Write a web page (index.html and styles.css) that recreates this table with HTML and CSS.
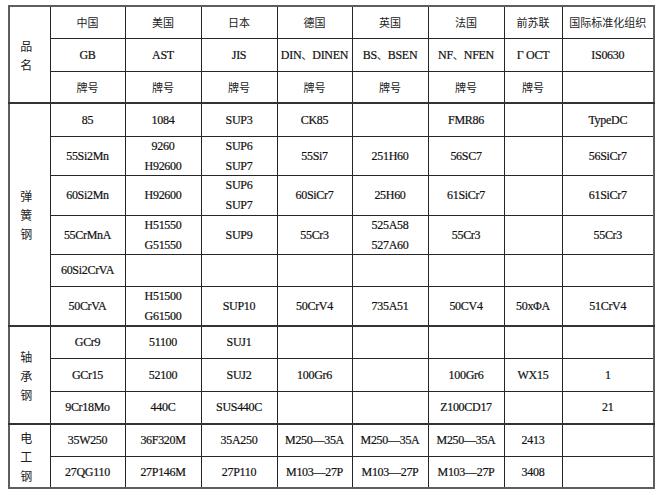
FILE: index.html
```html
<!DOCTYPE html>
<html lang="zh">
<head>
<meta charset="utf-8">
<title>钢号对照表</title>
<link rel="stylesheet" href="styles.css">
</head>
<body>
<table class="grades">
  <colgroup>
    <col class="w41"><col class="w75"><col class="w76"><col class="w76"><col class="w75"><col class="w76"><col class="w76"><col class="w58"><col class="w92">
  </colgroup>
  <tbody class="sec">
    <tr class="h32">
      <th rowspan="3" class="cat"><div class="stack">品<br>名</div></th>
      <th class="zh">中国</th><th class="zh">美国</th><th class="zh">日本</th><th class="zh">德国</th><th class="zh">英国</th><th class="zh">法国</th><th class="zh">前苏联</th><th class="zh">国际标准化组织</th>
    </tr>
    <tr class="h33">
      <td>GB</td><td>AST</td><td>JIS</td><td>DIN<span class="zh">、</span>DINEN</td><td>BS<span class="zh">、</span>BSEN</td><td>NF<span class="zh">、</span>NFEN</td><td>Г OCT</td><td>IS0630</td>
    </tr>
    <tr class="h32">
      <td class="zh">牌号</td><td class="zh">牌号</td><td class="zh">牌号</td><td class="zh">牌号</td><td class="zh">牌号</td><td class="zh">牌号</td><td class="zh">牌号</td><td></td>
    </tr>
  </tbody>
  <tbody class="sec">
    <tr class="h33">
      <th rowspan="6" class="cat"><div class="stack">弹<br>簧<br>钢</div></th>
      <td>85</td><td>1084</td><td>SUP3</td><td>CK85</td><td></td><td>FMR86</td><td></td><td>TypeDC</td>
    </tr>
    <tr class="h39">
      <td>55Si2Mn</td><td><div class="pair"><span>9260</span><span>H92600</span></div></td><td><div class="pair"><span>SUP6</span><span>SUP7</span></div></td><td>55Si7</td><td>251H60</td><td>56SC7</td><td></td><td>56SiCr7</td>
    </tr>
    <tr class="h40">
      <td>60Si2Mn</td><td>H92600</td><td><div class="pair"><span>SUP6</span><span>SUP7</span></div></td><td>60SiCr7</td><td>25H60</td><td>61SiCr7</td><td></td><td>61SiCr7</td>
    </tr>
    <tr class="h39">
      <td>55CrMnA</td><td><div class="pair"><span>H51550</span><span>G51550</span></div></td><td>SUP9</td><td>55Cr3</td><td><div class="pair"><span>525A58</span><span>527A60</span></div></td><td>55Cr3</td><td></td><td>55Cr3</td>
    </tr>
    <tr class="h32">
      <td>60Si2CrVA</td><td></td><td></td><td></td><td></td><td></td><td></td><td></td>
    </tr>
    <tr class="h40">
      <td>50CrVA</td><td><div class="pair"><span>H51500</span><span>G61500</span></div></td><td>SUP10</td><td>50CrV4</td><td>735A51</td><td>50CV4</td><td>50xΦA</td><td>51CrV4</td>
    </tr>
  </tbody>
  <tbody class="sec">
    <tr class="h32">
      <th rowspan="3" class="cat"><div class="stack">轴<br>承<br>钢</div></th>
      <td>GCr9</td><td>51100</td><td>SUJ1</td><td></td><td></td><td></td><td></td><td></td>
    </tr>
    <tr class="h33">
      <td>GCr15</td><td>52100</td><td>SUJ2</td><td>100Gr6</td><td></td><td>100Gr6</td><td>WX15</td><td>1</td>
    </tr>
    <tr class="h33">
      <td>9Cr18Mo</td><td>440C</td><td>SUS440C</td><td></td><td></td><td>Z100CD17</td><td></td><td>21</td>
    </tr>
  </tbody>
  <tbody class="sec">
    <tr class="h32">
      <th rowspan="2" class="cat"><div class="stack">电<br>工<br>钢</div></th>
      <td>35W250</td><td>36F320M</td><td>35A250</td><td>M250—35A</td><td>M250—35A</td><td>M250—35A</td><td>2413</td><td></td>
    </tr>
    <tr class="h32">
      <td>27QG110</td><td>27P146M</td><td>27P110</td><td>M103—27P</td><td>M103—27P</td><td>M103—27P</td><td>3408</td><td></td>
    </tr>
  </tbody>
</table>
</body>
</html>
```
FILE: styles.css
```css
html, body {
  margin: 0;
  background: #ffffff;
}

body {
  padding: 5px 0 0 8px;
}

.grades {
  border-collapse: collapse;
  table-layout: fixed;
  width: 645px;
  border: 2px solid #5e5e5e;
  font-family: "Liberation Serif", "Noto Sans CJK SC", serif;
  font-size: 12px;
  line-height: 16px;
  letter-spacing: -0.3px;
  color: #111111;
  -webkit-text-stroke: 0.2px #111111;
}

.w41 { width: 41px; }
.w75 { width: 75px; }
.w76 { width: 76px; }
.w58 { width: 58px; }
.w92 { width: 92px; }

.grades th,
.grades td {
  border: 1px solid #262626;
  padding: 0;
  text-align: center;
  vertical-align: middle;
  font-weight: normal;
  white-space: nowrap;
}

.grades .sec + .sec tr:first-child > * {
  border-top: 2px solid #333333;
}

.pair {
  height: 30px;
  display: flex;
  flex-direction: column;
  justify-content: center;
  align-items: center;
}

.pair span {
  display: block;
  line-height: 20px;
  flex: none;
}

.grades .cat {
  font-family: "Noto Sans CJK SC", sans-serif;
  font-size: 12px;
  letter-spacing: 0;
  padding-right: 7px;
  color: #222222;
  -webkit-text-stroke: 0;
}

.stack {
  line-height: 19px;
}

.zh {
  font-family: "Noto Sans CJK SC", sans-serif;
  font-size: 11px;
  letter-spacing: 0;
  color: #222222;
  -webkit-text-stroke: 0;
}

.h32 { height: 32px; }
.h33 { height: 33px; }
.h39 { height: 39px; }
.h40 { height: 40px; }
```
